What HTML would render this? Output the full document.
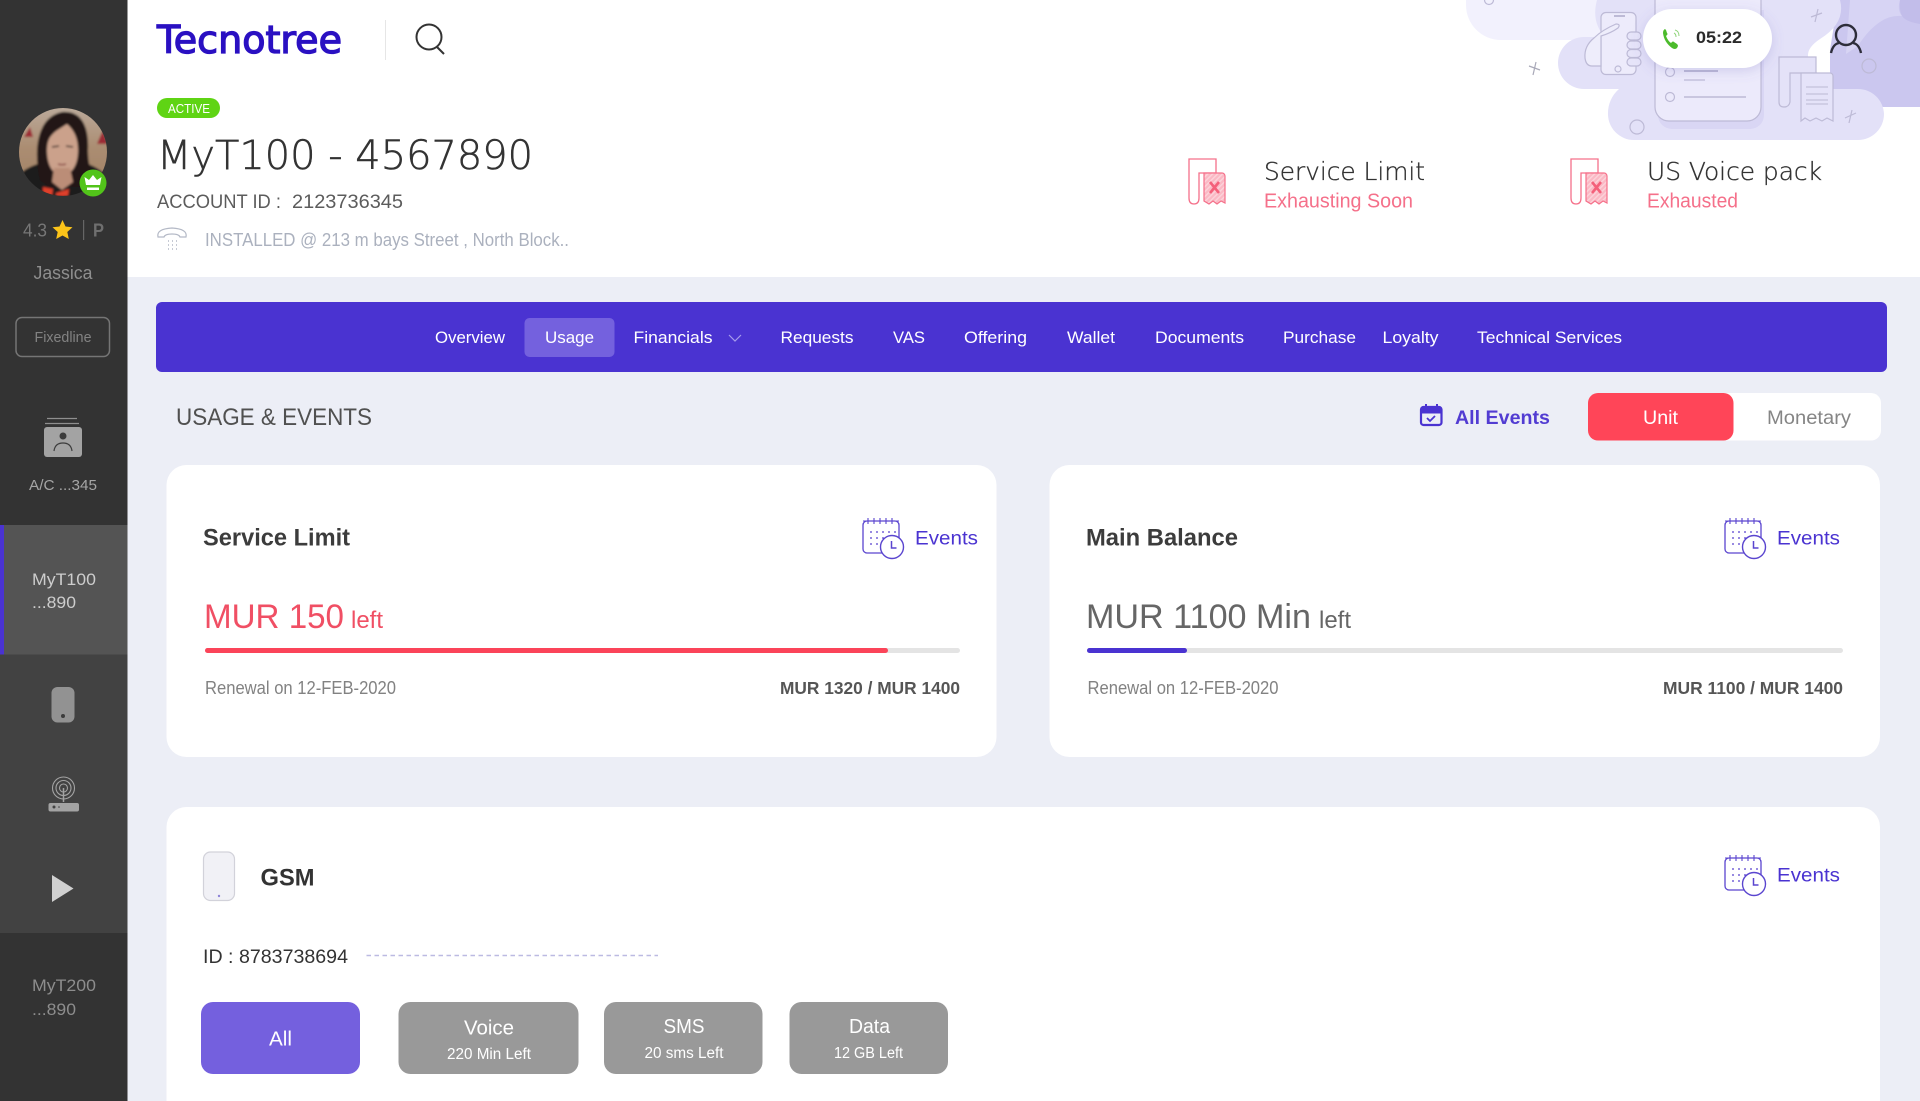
<!DOCTYPE html>
<html lang="en"><head><meta charset="utf-8"><title>Tecnotree</title>
<style>
html,body{margin:0;padding:0;width:1920px;height:1101px;overflow:hidden;background:#eceef6}
svg{display:block;position:absolute;left:0;top:0}
text{font-family:"Liberation Sans",Arial,sans-serif}
.dj{font-family:"DejaVu Sans","Liberation Sans",sans-serif}
</style></head><body>
<svg width="1920" height="1101" viewBox="0 0 1920 1101" xmlns="http://www.w3.org/2000/svg">
<defs>
<clipPath id="av"><circle cx="63" cy="152" r="44"/></clipPath>
<filter id="sh" x="-30%" y="-50%" width="160%" height="220%"><feDropShadow dx="0" dy="3" stdDeviation="6" flood-color="#6b64b8" flood-opacity=".22"/></filter>
<filter id="b1" x="-20%" y="-20%" width="140%" height="140%"><feGaussianBlur stdDeviation="1"/></filter>
<linearGradient id="avbg" x1="0" y1="0" x2="0" y2="1"><stop offset="0" stop-color="#bcab9c"/><stop offset=".45" stop-color="#ab8d72"/><stop offset="1" stop-color="#a07f62"/></linearGradient>
<pattern id="hatch" width="3.5" height="3.5" patternUnits="userSpaceOnUse" patternTransform="rotate(45)"><rect width="3.5" height="3.5" fill="#fbb8c4"/><rect width="1.4" height="3.5" fill="#fcd3da"/></pattern>
<g id="cal" fill="none" stroke="#5a45cf" stroke-width="1.3">
<path d="M24 4H5a4 4 0 0 0-4 4v24a4 4 0 0 0 4 4h22M37 26V8a4 4 0 0 0-4-4h-9" />
<path d="M6 1v6M12 1v6M18 1v6M24 1v6M30 1v6M1 4h36" stroke-width="1.1"/>
<path d="M8 15h2M14 15h2M20 15h2M26 15h2M32 15h2M8 21h2M14 21h2M20 21h2M26 21h2M8 27h2M14 27h2" stroke-width="1.2"/>
<circle cx="30" cy="30" r="11.5" fill="#fff" stroke-width="1.4"/>
<path d="M29.5 24v7h5" stroke-width="1.5"/>
</g>
<g id="rec">
<path d="M28 15V1H1v39q0 6 5 6t5-6V15h17" fill="#fff" stroke="#f5708a" stroke-width="1.3"/>
<path d="M16 15h18a3 3 0 0 1 3 3v27l-4-2-4 3-4-3-4 3-5-3z" fill="url(#hatch)" stroke="#f5708a" stroke-width="1.2"/>
<path d="M22 24l9 11M31 24l-9 11" stroke="#f4607a" stroke-width="2.6" fill="none"/>
</g>
</defs>

<!-- page bg -->
<rect width="1920" height="1101" fill="#eceef6"/>
<!-- header -->
<rect x="127" y="0" width="1793" height="277" fill="#fff"/>

<!-- illustration -->
<path d="M1466 0v5a35 35 0 0 0 35 35h120V0z" fill="#f2f1fd"/>
<path d="M1838 0h82v107h-90V50z" fill="#cbc7ef"/>
<path d="M1850 0h50q-3 10 2 16-12-1-22 6-12 8-22 24l-12 8z" fill="#d7d4f4"/>
<path d="M1900 0h20v24q-14-2-18-8-3-6-2-16z" fill="#c2bdea"/>
<path d="M1597 0q-6 22 8 37h-21a26 26 0 0 0 0 52h35a32 32 0 0 0-11 25.500a26 26 0 0 0 26 25.500h224a26 26 0 0 0 26-26a26 26 0 0 0-26-25h-50V55q0-8 12-16 26-16 20-39z" fill="#e3e1f8"/>
<g fill="none" stroke="#bdbad6" stroke-width="1.2">
<path d="M1655 4v105a14 14 0 0 0 14 14h78a14 14 0 0 0 14-14V4" fill="#d9d6f4" stroke="none" transform="translate(3 6)"/>
<path d="M1655 -8v115a14 14 0 0 0 14 14h78a14 14 0 0 0 14-14V-8" fill="#eceafb"/>
<circle cx="1670" cy="72" r="4.500"/><circle cx="1670" cy="97" r="4.500"/>
<path d="M1684 71h34" stroke-width="2"/><path d="M1684 80h21"/><path d="M1684 97h62" stroke-width="1.500"/>
<!-- small phone and hand -->
<rect x="1601" y="12.500" width="35" height="62" rx="5" fill="#edebfb"/>
<path d="M1614 16h11" stroke-width="2"/><circle cx="1618" cy="69" r="3"/>
<path d="M1616 24q-14 6-22 14-10 8-9 20 1 8 7 8h9V36q10-3 17-8 3-4-2-4z" fill="#eeedfb"/>
<rect x="1627" y="32" width="14" height="8" rx="4" fill="#e6e4f9"/><rect x="1627" y="41" width="14" height="8" rx="4" fill="#e6e4f9"/>
<rect x="1627" y="49.500" width="14" height="8" rx="4" fill="#e6e4f9"/><rect x="1627" y="58" width="14" height="8" rx="4" fill="#e6e4f9"/>
<!-- deco -->
<circle cx="1637" cy="127" r="7"/><circle cx="1869" cy="66" r="7"/><circle cx="1489" cy="0" r="4.500"/>
<path d="M1536 62l-3 13M1529 66l11 4" stroke="#a9a9b8"/><path d="M1818 9l-3 13M1811 17l11-4" /><path d="M1852 110l-3 13M1845 118l11-5"/>
<!-- docs -->
<path d="M1816 73V57h-37v45q0 5 5 5t6-5V73h27" fill="#e4e2f8"/>
<path d="M1801 73h29a3 3 0 0 1 3 3v45l-6-3-5 3-6-3-6 3-5-3-4 3z" fill="#e5e3f9"/>
<path d="M1806 87h22M1806 94h22M1806 100h22M1806 104h22" stroke="#c4c1dc"/>
</g>

<!-- call pill -->
<rect x="1643" y="9" width="129" height="59" rx="29.500" fill="#fff" filter="url(#sh)"/>
<path d="M1665 29q-2 1-2 4 1 9 9 15 3 2 5 0l1-2q0-1-1-2l-3-2q-1-1-2 0l-1 1q-3-2-5-7l1-1q1-1 0-2l-1-3q-1-1-1-1z" fill="#4cbb2c"/>
<path d="M1674 33q2 1 2 4M1675 30q4 1 4 6" fill="none" stroke="#8fd47a" stroke-width="1"/>
<text x="1696" y="43" font-size="17" font-weight="700" fill="#2a2a2a" textLength="46" lengthAdjust="spacingAndGlyphs">05:22</text>
<!-- user -->
<g fill="none" stroke="#2d2d3a" stroke-width="2.400">
<circle cx="1846" cy="35" r="10"/><path d="M1831 53q2-9 8-10M1861 53q-2-9-8-10"/>
</g>

<!-- logo -->
<text class="dj" x="157" y="53" font-size="38" fill="#2a10c2" stroke="#2a10c2" stroke-width="1.300" textLength="185" lengthAdjust="spacingAndGlyphs">Tecnotree</text>
<rect x="385" y="20" width="1" height="40" fill="#e6e6e6"/>
<g fill="none" stroke="#333" stroke-width="2"><circle cx="429" cy="37" r="12.500"/><path d="M437 47l7 7"/></g>

<!-- active -->
<rect x="157" y="98" width="63" height="20" rx="10" fill="#5fd414"/>
<text x="168" y="113" font-size="12.500" fill="#fff" textLength="42" lengthAdjust="spacingAndGlyphs">ACTIVE</text>
<text class="dj" x="157" y="169" font-size="40" font-weight="200" fill="#333" stroke="#333" stroke-width=".5" textLength="376" lengthAdjust="spacingAndGlyphs">MyT100 - 4567890</text>
<text x="157" y="208" font-size="19.500" fill="#5c5c5c" textLength="124" lengthAdjust="spacingAndGlyphs">ACCOUNT ID :</text>
<text x="292" y="208" font-size="19.500" fill="#5c5c5c" textLength="111" lengthAdjust="spacingAndGlyphs">2123736345</text>
<g fill="none" stroke="#b4b9c6" stroke-width="1.200">
<path d="M158 237q-2-8 14-9 16 1 14 9h-6q-1-3-8-3t-8 3z"/>
<path d="M168 241h1M172 241h1M176 241h1M168 245h1M172 245h1M176 245h1M168 249h1M172 249h1M176 249h1" stroke-width="1.500"/>
</g>
<text x="205" y="246" font-size="18" fill="#abb1be" textLength="364" lengthAdjust="spacingAndGlyphs">INSTALLED @ 213 m bays Street , North Block..</text>

<!-- alerts -->
<use href="#rec" x="1188" y="158"/>
<text class="dj" x="1264" y="180" font-size="24.500" font-weight="200" fill="#333" stroke="#333" stroke-width=".35" textLength="161" lengthAdjust="spacingAndGlyphs">Service Limit</text>
<text x="1264" y="207.500" font-size="20" fill="#f5708a" textLength="149" lengthAdjust="spacingAndGlyphs">Exhausting Soon</text>
<use href="#rec" x="1570" y="158"/>
<text class="dj" x="1647" y="180" font-size="24.500" font-weight="200" fill="#333" stroke="#333" stroke-width=".35" textLength="175" lengthAdjust="spacingAndGlyphs">US Voice pack</text>
<text x="1647" y="207.500" font-size="20" fill="#f5708a" textLength="91" lengthAdjust="spacingAndGlyphs">Exhausted</text>

<!-- nav -->
<rect x="156" y="302" width="1731" height="70" rx="6" fill="#4a33d1"/>
<rect x="524.500" y="318" width="90" height="39" rx="5" fill="#7461de"/>
<g font-size="17" fill="#fff">
<text x="435" y="343" textLength="70" lengthAdjust="spacingAndGlyphs">Overview</text>
<text x="545" y="343" textLength="49" lengthAdjust="spacingAndGlyphs">Usage</text>
<text x="633.500" y="343" textLength="79" lengthAdjust="spacingAndGlyphs">Financials</text>
<text x="780.500" y="343" textLength="73" lengthAdjust="spacingAndGlyphs">Requests</text>
<text x="893" y="343" textLength="32" lengthAdjust="spacingAndGlyphs">VAS</text>
<text x="964" y="343" textLength="63" lengthAdjust="spacingAndGlyphs">Offering</text>
<text x="1067" y="343" textLength="48" lengthAdjust="spacingAndGlyphs">Wallet</text>
<text x="1155" y="343" textLength="89" lengthAdjust="spacingAndGlyphs">Documents</text>
<text x="1283" y="343" textLength="73" lengthAdjust="spacingAndGlyphs">Purchase</text>
<text x="1382.500" y="343" textLength="56" lengthAdjust="spacingAndGlyphs">Loyalty</text>
<text x="1477" y="343" textLength="145" lengthAdjust="spacingAndGlyphs">Technical Services</text>
</g>
<path d="M729 335l6 6 6-6" fill="none" stroke="#a79cec" stroke-width="1.200"/>

<!-- usage header -->
<text x="176" y="425" font-size="24" fill="#505050" textLength="196" lengthAdjust="spacingAndGlyphs">USAGE &amp; EVENTS</text>
<g fill="none" stroke="#4a33d1" stroke-width="2.200">
<rect x="1421" y="407" width="20.500" height="18" rx="2.500"/>
<path d="M1426 404v5M1437 404v5" stroke-width="2"/>
<path d="M1421 408h20.500v5h-20.500z" fill="#4a33d1" stroke-width="1"/>
<path d="M1427 418l3 3 5-5" stroke-width="1.800"/>
</g>
<text x="1455" y="424" font-size="19.500" font-weight="700" fill="#4a33d1" opacity=".95" textLength="95" lengthAdjust="spacingAndGlyphs">All Events</text>
<rect x="1600" y="393" width="281" height="47.500" rx="10" fill="#fff"/>
<rect x="1588" y="393" width="145.500" height="47.500" rx="10" fill="#ff4558"/>
<text x="1643" y="424" font-size="19.500" fill="#fff" textLength="35" lengthAdjust="spacingAndGlyphs">Unit</text>
<text x="1767" y="424" font-size="19.500" fill="#858585" textLength="84" lengthAdjust="spacingAndGlyphs">Monetary</text>

<!-- card 1 -->
<rect x="166.500" y="465" width="830" height="292" rx="20" fill="#fff"/>
<text x="203" y="545.500" font-size="24" font-weight="700" fill="#3c3c3c" textLength="147" lengthAdjust="spacingAndGlyphs">Service Limit</text>
<use href="#cal" x="862" y="517"/>
<text x="915" y="544.500" font-size="19.500" fill="#4a33d1" textLength="63" lengthAdjust="spacingAndGlyphs">Events</text>
<text x="204" y="628" font-size="34" fill="#f04f64" textLength="140" lengthAdjust="spacingAndGlyphs">MUR 150</text>
<text x="351" y="628" font-size="24" fill="#f04f64" textLength="32" lengthAdjust="spacingAndGlyphs">left</text>
<rect x="205" y="648" width="755" height="5" rx="2.500" fill="#e4e4e4"/>
<rect x="205" y="648" width="683" height="5" rx="2.500" fill="#fb4459"/>
<text x="205" y="694" font-size="18" fill="#828282" textLength="191" lengthAdjust="spacingAndGlyphs">Renewal on 12-FEB-2020</text>
<text x="780" y="694" font-size="17.500" font-weight="700" fill="#555" textLength="180" lengthAdjust="spacingAndGlyphs">MUR 1320 / MUR 1400</text>

<!-- card 2 -->
<rect x="1049.500" y="465" width="830.500" height="292" rx="20" fill="#fff"/>
<text x="1086" y="545.500" font-size="24" font-weight="700" fill="#3c3c3c" textLength="152" lengthAdjust="spacingAndGlyphs">Main Balance</text>
<use href="#cal" x="1724" y="517"/>
<text x="1777" y="544.500" font-size="19.500" fill="#4a33d1" textLength="63" lengthAdjust="spacingAndGlyphs">Events</text>
<text x="1086" y="628" font-size="34" fill="#666" textLength="225" lengthAdjust="spacingAndGlyphs">MUR 1100 Min</text>
<text x="1319" y="628" font-size="24" fill="#666" textLength="32" lengthAdjust="spacingAndGlyphs">left</text>
<rect x="1087" y="648" width="756" height="5" rx="2.500" fill="#e4e4e4"/>
<rect x="1087" y="648" width="100" height="5" rx="2.500" fill="#4a33d1"/>
<text x="1087.500" y="694" font-size="18" fill="#828282" textLength="191" lengthAdjust="spacingAndGlyphs">Renewal on 12-FEB-2020</text>
<text x="1663" y="694" font-size="17.500" font-weight="700" fill="#555" textLength="180" lengthAdjust="spacingAndGlyphs">MUR 1100 / MUR 1400</text>

<!-- GSM card -->
<rect x="166.500" y="807" width="1713.500" height="330" rx="20" fill="#fff"/>
<rect x="203.500" y="852" width="31" height="48.500" rx="7" fill="#f1f1f6" stroke="#d2d2da" stroke-width="1.200"/>
<circle cx="219" cy="896" r="1.200" fill="#8f85d8"/>
<text x="260.500" y="885.500" font-size="24" font-weight="700" fill="#333" textLength="54" lengthAdjust="spacingAndGlyphs">GSM</text>
<use href="#cal" x="1724" y="854"/>
<text x="1777" y="881.500" font-size="19.500" fill="#4a33d1" textLength="63" lengthAdjust="spacingAndGlyphs">Events</text>
<text x="203" y="963" font-size="19" fill="#333" textLength="145" lengthAdjust="spacingAndGlyphs">ID : 8783738694</text>
<path d="M366.500 955.500H658" stroke="#bcbae2" stroke-width="1.500" stroke-dasharray="4.500 3.500" fill="none"/>
<rect x="201" y="1002" width="159" height="72" rx="12" fill="#7460de"/>
<text x="269" y="1045.500" font-size="20" fill="#fff" textLength="23" lengthAdjust="spacingAndGlyphs">All</text>
<rect x="398.500" y="1002" width="180" height="72" rx="12" fill="#999"/>
<text x="464" y="1034.500" font-size="20" fill="#fff" textLength="50" lengthAdjust="spacingAndGlyphs">Voice</text>
<text x="447" y="1059" font-size="15.500" fill="#fff" textLength="84" lengthAdjust="spacingAndGlyphs">220 Min Left</text>
<rect x="604" y="1002" width="158.500" height="72" rx="12" fill="#999"/>
<text x="663.500" y="1033" font-size="20" fill="#fff" textLength="41" lengthAdjust="spacingAndGlyphs">SMS</text>
<text x="644.500" y="1058" font-size="15.500" fill="#fff" textLength="79" lengthAdjust="spacingAndGlyphs">20 sms Left</text>
<rect x="789.500" y="1002" width="158.500" height="72" rx="12" fill="#999"/>
<text x="849" y="1033" font-size="20" fill="#fff" textLength="41" lengthAdjust="spacingAndGlyphs">Data</text>
<text x="834" y="1058" font-size="15.500" fill="#fff" textLength="69" lengthAdjust="spacingAndGlyphs">12 GB Left</text>

<!-- sidebar -->
<rect x="0" y="0" width="127.500" height="1101" fill="#333"/>
<rect x="0" y="525" width="127.500" height="129.500" fill="#545454"/>
<rect x="0" y="654.500" width="127.500" height="278.500" fill="#424242"/>
<rect x="0" y="525" width="4" height="129.500" fill="#4a33d1"/>

<!-- avatar -->
<g clip-path="url(#av)">
<g filter="url(#b1)">
<rect x="17" y="106" width="92" height="92" fill="url(#avbg)"/>
<path d="M24 137l6-10 3 10zM97 144l6-14 5 14z" fill="#9c2a35"/>
<path d="M17 198v-20q6-10 24-15l22 4 22-4q16 5 24 16v19z" fill="#1d1a1a"/>
<path d="M40 180C33 150 37 117 62 112c21-2 27 17 26 38 0 14 3 22 6 27l-14 10H50z" fill="#221917"/>
<path d="M47 150c0-9 3-15 9-19l11-7c7 6 11 14 11 26 0 15-6 25-16 25s-15-11-15-25z" fill="#cba18b"/>
<path d="M46 146c2-10 11-16 21-24l-6-8-16 10zM67 122c5 5 10 12 11 24l6-14-10-14z" fill="#221917"/>
<path d="M54 168h16l3 14-11 8-10-8z" fill="#bb8d77"/>
<path d="M52 147l7-1M66 146l7 1" stroke="#41302a" stroke-width="1.600" fill="none"/>
<path d="M58 164q4 1.500 8 0" stroke="#8c4b47" stroke-width="1.500" fill="none"/>
<path d="M43 187l10 2-1 7-9-3zM56 193l13-4-1 7H56z" fill="#e0412c"/>
</g>
</g>
<circle cx="93" cy="183" r="13.500" fill="#52c41a"/>
<path d="M86 185l-1.500-8 4.500 3 4-5 4 5 4.500-3-1.500 8z" fill="#fff"/><rect x="87" y="187.500" width="12" height="2.500" fill="#fff"/>

<text x="23" y="236.500" font-size="18" fill="#777" textLength="24" lengthAdjust="spacingAndGlyphs">4.3</text>
<path d="M62.500 220l3 6.500 7 .8-5.200 4.700 1.500 7-6.300-3.500-6.300 3.500 1.500-7-5.200-4.700 7-.8z" fill="#fcc419"/>
<rect x="83" y="220" width="1.200" height="20" fill="#666"/>
<text x="93" y="236.500" font-size="18" fill="#6f6f6f" font-weight="700" textLength="11" lengthAdjust="spacingAndGlyphs">P</text>
<text x="63" y="279" font-size="18" fill="#8f8f8f" text-anchor="middle" textLength="59" lengthAdjust="spacingAndGlyphs">Jassica</text>
<rect x="16" y="317.500" width="93.500" height="39" rx="6" fill="none" stroke="#757575" stroke-width="1.500"/>
<text x="63" y="342" font-size="14.500" fill="#828282" text-anchor="middle" textLength="57" lengthAdjust="spacingAndGlyphs">Fixedline</text>

<path d="M47 418.500h30M45 423.500h34" stroke="#8f8f8f" stroke-width="1.200" fill="none"/>
<rect x="44" y="427" width="38" height="30" rx="3" fill="#a3a3a3"/>
<circle cx="63" cy="436" r="3.500" fill="#3c3c3c"/>
<path d="M54 451q1-8 9-8t9 8" fill="none" stroke="#3c3c3c" stroke-width="1.200"/>
<text x="63" y="490" font-size="14.500" fill="#a5a5a5" text-anchor="middle" textLength="68" lengthAdjust="spacingAndGlyphs">A/C ...345</text>

<text x="32" y="585" font-size="17" fill="#cdcdcd" textLength="64" lengthAdjust="spacingAndGlyphs">MyT100</text>
<text x="32" y="608" font-size="17" fill="#cdcdcd" textLength="44" lengthAdjust="spacingAndGlyphs">...890</text>

<rect x="51.500" y="687" width="23" height="35.500" rx="6" fill="#929292"/>
<circle cx="63" cy="716" r="2" fill="#3c3c3c"/>

<g fill="none" stroke="#a3a3a3" stroke-width="1.100">
<circle cx="63.500" cy="788" r="11"/><circle cx="63.500" cy="788" r="7.500"/><circle cx="63.500" cy="788" r="4"/>
<path d="M63.500 788v14" stroke-width="1.500"/>
</g>
<rect x="48.500" y="803" width="30.500" height="8.500" rx="2" fill="#a3a3a3"/>
<circle cx="54" cy="807" r="1.500" fill="#424242"/><circle cx="59" cy="807" r=".8" fill="#424242"/>

<path d="M52 875L73.500 888.500 52 902z" fill="#d0d0d0"/>

<text x="32" y="991" font-size="17" fill="#8d8d8d" textLength="64" lengthAdjust="spacingAndGlyphs">MyT200</text>
<text x="32" y="1015" font-size="17" fill="#8d8d8d" textLength="44" lengthAdjust="spacingAndGlyphs">...890</text>
</svg>
</body></html>
